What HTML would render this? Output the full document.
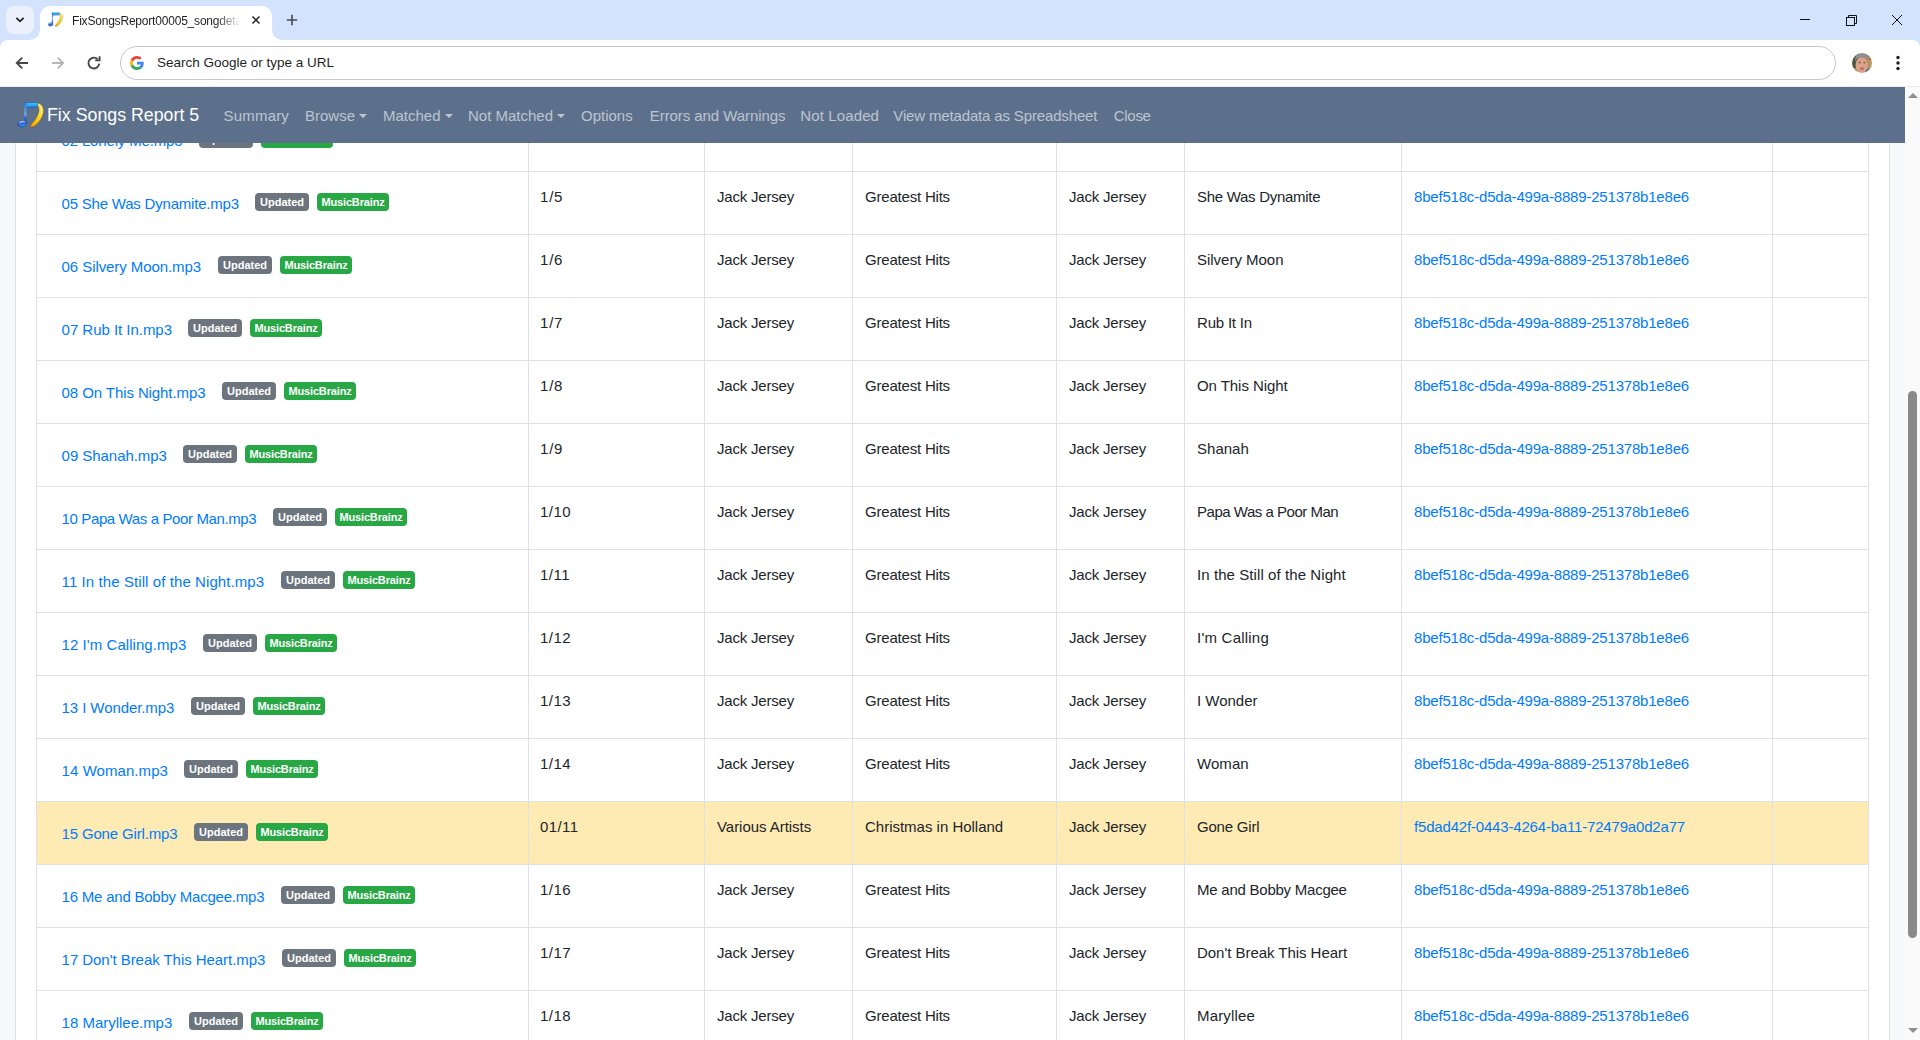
<!DOCTYPE html>
<html><head><meta charset="utf-8"><title>FixSongsReport00005_songdetails</title><style>
*{box-sizing:border-box;margin:0;padding:0}
html,body{width:1920px;height:1040px;overflow:hidden;background:#fff;font-family:"Liberation Sans",sans-serif}
#strip{position:absolute;left:0;top:0;width:1920px;height:50px;background:#d3e3fd}
#tsearch{position:absolute;left:6px;top:6px;width:28px;height:28px;border-radius:8px;background:#eaf1fd}
#tab{position:absolute;left:40px;top:6px;width:232px;height:34px;background:#fff;border-radius:10px 10px 0 0}
#tab:before,#tab:after{content:"";position:absolute;bottom:0;width:10px;height:10px;background:transparent}
#tab:before{left:-10px;border-bottom-right-radius:10px;box-shadow:4px 4px 0 4px #fff}
#tab:after{right:-10px;border-bottom-left-radius:10px;box-shadow:-4px 4px 0 4px #fff}
.ttl{position:absolute;left:32px;top:8px;letter-spacing:-0.2px;font-size:12px;line-height:15px;color:#1f1f1f;white-space:nowrap;width:170px;overflow:hidden;-webkit-mask-image:linear-gradient(90deg,#000 144px,transparent 169px)}
.fav{position:absolute;left:6.3px;top:4.2px}
#toolbar{position:absolute;left:0;top:40px;width:1920px;height:47px;background:#fff;border-radius:8px 8px 0 0}
#omni{position:absolute;left:120px;top:46px;width:1716px;height:34px;border:1px solid #c7c7c7;border-radius:17px;background:#fff}
.omt{position:absolute;left:157px;top:55px;font-size:13.5px;line-height:16px;color:#1f1f1f;white-space:nowrap}
svg.ic{position:absolute}
#page{position:absolute;left:0;top:87px;width:1905px;height:953px;background:#f8f9fa;overflow:hidden}
#card{position:absolute;left:15px;top:-20px;width:1875px;height:1100px;background:#fff;border-left:1px solid #dfdfdf;border-right:1px solid #dfdfdf}
.vl{position:absolute;top:0;width:1px;height:953px;background:#dee2e6}
.hz{position:absolute;left:36px;width:1833px;height:1px;background:#dee2e6}
.hl{position:absolute;left:37px;width:1831px;height:62px;background:#feebb4}
.tx,.lk{position:absolute;font-size:15px;line-height:15px;white-space:nowrap}
.tx{color:#212529;letter-spacing:-0.2px}
.lk{color:#007bff}
.fn{letter-spacing:-0.3px}
.ud{letter-spacing:-0.25px}
.bd{position:absolute;height:18px;border-radius:4px;color:#fff;font-weight:bold;font-size:11px;line-height:18px;text-align:center}
.bs{background:#6c757d;width:54px}
.bg{background:#28a745;width:72px;letter-spacing:-0.15px}
#nav{position:absolute;left:0;top:87px;width:1905px;height:56px;background:#5c708c}
.brand{position:absolute;left:47px;top:18px;font-size:17.8px;line-height:20px;color:#fff;white-space:nowrap}
.logo{position:absolute;left:14px;top:11px}
.nv{position:absolute;top:20.7px;font-size:15px;line-height:16px;color:rgba(255,255,255,.6);white-space:nowrap}
.caret{display:inline-block;width:0;height:0;border-left:4px solid transparent;border-right:4px solid transparent;border-top:4px solid rgba(255,255,255,.6);vertical-align:3px;margin-left:4px}
#sb{position:absolute;left:1905px;top:87px;width:15px;height:953px;background:#fafafa}
#thumb{position:absolute;left:3px;top:304px;width:9px;height:547px;border-radius:5px;background:#8a8a8a}
.arr{position:absolute;left:3px;width:0;height:0;border-left:5px solid transparent;border-right:5px solid transparent}
</style></head><body>
<div id="strip"></div>
<div id="tsearch"></div>
<div id="tab"><svg class="fav" width="18" height="18" viewBox="0 0 32 32">
<defs>
<linearGradient id="lbm2" x1="0" y1="0" x2="0" y2="1"><stop offset="0" stop-color="#3fd0ff"/><stop offset="1" stop-color="#1b86e6"/></linearGradient>
<linearGradient id="lst2" x1="0" y1="0" x2="0" y2="1"><stop offset="0" stop-color="#1a7ce0"/><stop offset=".6" stop-color="#7fb6e8"/><stop offset=".7" stop-color="#1a6fe0"/><stop offset="1" stop-color="#1850c8"/></linearGradient>
<linearGradient id="lhd2" x1="0" y1="0" x2="0" y2="1"><stop offset="0" stop-color="#b9f4ff"/><stop offset=".5" stop-color="#3a5ad0"/><stop offset="1" stop-color="#20c0f0"/></linearGradient>
<linearGradient id="lsw2" x1="1" y1="0" x2="0" y2="1"><stop offset="0" stop-color="#fff7a0"/><stop offset=".45" stop-color="#ffd820"/><stop offset=".85" stop-color="#ffb000"/><stop offset="1" stop-color="#ff7800"/></linearGradient>
</defs>
<path d="M10.4 4.9 L23.6 4.4 L24.4 9 L12.2 9.4 Z" fill="url(#lbm2)" stroke="#1550b0" stroke-width=".5"/>
<rect x="10.4" y="5" width="1.9" height="20" fill="url(#lst2)"/>
<ellipse cx="8.2" cy="25.6" rx="4.2" ry="3.2" transform="rotate(-12 8.2 25.6)" fill="url(#lhd2)" stroke="#1a2f9a" stroke-width=".6"/>
<path d="M23.6 5 C28 6 30 9.5 29.4 14 C28.8 19.5 24.5 25.5 19.5 28.6 C17.5 29.6 15.8 29 16.4 27.4 C20 23.5 23.8 18.5 24.8 14 C25.3 11 24.8 9 23.9 8 Z" fill="url(#lsw2)" stroke="#7a5a10" stroke-width=".5"/>
</svg><span class="ttl">FixSongsReport00005_songdetails</span></div>
<div id="toolbar"></div>
<div id="omni"></div>
<div style="position:absolute;left:0;top:86px;width:1920px;height:1px;background:#ececec"></div>
<span class="omt">Search Google or type a URL</span>

<svg class="ic" style="left:14px;top:14px" width="12" height="12" viewBox="0 0 12 12"><path d="M2.4 3.8 L6 7.4 L9.6 3.8" fill="none" stroke="#1f1f1f" stroke-width="1.7"/></svg>
<svg class="ic" style="left:251px;top:15px" width="10" height="10" viewBox="0 0 10 10"><path d="M1.5 1.5 L8.5 8.5 M8.5 1.5 L1.5 8.5" stroke="#1f1f1f" stroke-width="1.45"/></svg>
<svg class="ic" style="left:286px;top:14px" width="12" height="12" viewBox="0 0 12 12"><path d="M6 0.8 V11.2 M0.8 6 H11.2" stroke="#474747" stroke-width="1.6"/></svg>
<svg class="ic" style="left:1799px;top:14px" width="12" height="12" viewBox="0 0 12 12"><path d="M1 5.5 H11" stroke="#111" stroke-width="1"/></svg>
<svg class="ic" style="left:1845px;top:14px" width="12" height="12" viewBox="0 0 12 12"><rect x="1.5" y="3.5" width="8" height="8" fill="none" stroke="#111" stroke-width="1"/><path d="M3.5 1.5 H11.5 V9.5 M3.5 1.5 V3.5 M9.5 9.5 H11.5" fill="none" stroke="#111" stroke-width="1"/></svg>
<svg class="ic" style="left:1891px;top:14px" width="12" height="12" viewBox="0 0 12 12"><path d="M1 1 L11 11 M11 1 L1 11" stroke="#111" stroke-width="1"/></svg>
<svg class="ic" style="left:14px;top:55px" width="16" height="16" viewBox="0 0 16 16"><path d="M14 8 H3 M8.2 2.6 L2.8 8 L8.2 13.4" fill="none" stroke="#474747" stroke-width="1.9"/></svg>
<svg class="ic" style="left:50px;top:55px" width="16" height="16" viewBox="0 0 16 16"><path d="M2 8 H13 M7.8 2.6 L13.2 8 L7.8 13.4" fill="none" stroke="#b7b7b7" stroke-width="1.9"/></svg>
<svg class="ic" style="left:86px;top:55px" width="16" height="16" viewBox="0 0 16 16"><path d="M13.2 8.6 A5.4 5.4 0 1 1 11.6 4.2" fill="none" stroke="#474747" stroke-width="1.9"/><path d="M9.2 5.4 H13.6 V1.2" fill="none" stroke="#474747" stroke-width="1.9"/></svg>
<svg class="ic" style="left:130px;top:56px" width="14" height="14" viewBox="0 0 48 48"><path fill="#EA4335" d="M24 9.5c3.54 0 6.71 1.22 9.21 3.6l6.85-6.85C35.9 2.38 30.47 0 24 0 14.62 0 6.51 5.38 2.56 13.22l7.98 6.19C12.43 13.72 17.74 9.5 24 9.5z"/><path fill="#4285F4" d="M46.98 24.55c0-1.57-.15-3.09-.38-4.55H24v9.02h12.94c-.58 2.96-2.26 5.48-4.78 7.18l7.73 6c4.51-4.18 7.09-10.36 7.09-17.65z"/><path fill="#FBBC05" d="M10.53 28.59c-.48-1.45-.76-2.99-.76-4.59s.27-3.14.76-4.59l-7.98-6.19C.92 16.46 0 20.12 0 24c0 3.88.92 7.54 2.56 10.78l7.97-6.19z"/><path fill="#34A853" d="M24 48c6.48 0 11.93-2.13 15.89-5.81l-7.73-6c-2.15 1.45-4.92 2.3-8.16 2.3-6.26 0-11.57-4.22-13.47-9.91l-7.98 6.19C6.51 42.62 14.62 48 24 48z"/></svg>
<svg class="ic" style="left:1850px;top:51px" width="24" height="24" viewBox="0 0 24 24"><defs><clipPath id="av"><circle cx="12" cy="12" r="10"/></clipPath><filter id="avb"><feGaussianBlur stdDeviation=".45"/></filter></defs><g clip-path="url(#av)"><g filter="url(#avb)"><rect width="24" height="24" fill="#a88c5c"/><path d="M0 0 H9 V8 L6 17 H0Z" fill="#4f5a3c"/><path d="M15 0 H24 V7 L19 6Z" fill="#5b6b45"/><rect x="17" y="9" width="6" height="11" fill="#b89462"/><ellipse cx="11.6" cy="14.2" rx="6" ry="8" fill="#dba38c"/><path d="M5.2 10 C4.8 4 8 2.2 12 2.2 C16 2.2 18.6 4.5 18.2 9.5 C17 6.8 15 6 12 6.2 C8.5 6.4 6.6 7.5 5.2 10Z" fill="#8f8f99"/><ellipse cx="9.6" cy="11.6" rx="1.3" ry=".8" fill="#8a5a40"/><ellipse cx="14.4" cy="11.6" rx="1.3" ry=".8" fill="#8a5a40"/><ellipse cx="12" cy="17.5" rx="2.6" ry="1.6" fill="#b97a66"/><path d="M15.5 19.5 L19 17.5 L21 19.5 L17.5 23Z" fill="#3b62b4"/><circle cx="20.4" cy="8.2" r="1" fill="#d04848"/></g></g></svg>
<svg class="ic" style="left:1895px;top:55px" width="6" height="16" viewBox="0 0 6 16"><circle cx="3" cy="2.5" r="1.7" fill="#1f1f1f"/><circle cx="3" cy="8" r="1.7" fill="#1f1f1f"/><circle cx="3" cy="13.5" r="1.7" fill="#1f1f1f"/></svg>

<div id="page">
<div id="card"></div>
<div class="hl" style="top:715px"></div>
<div class="vl" style="left:36px"></div>
<div class="vl" style="left:528px"></div>
<div class="vl" style="left:704px"></div>
<div class="vl" style="left:852px"></div>
<div class="vl" style="left:1056px"></div>
<div class="vl" style="left:1184px"></div>
<div class="vl" style="left:1401px"></div>
<div class="vl" style="left:1772px"></div>
<div class="vl" style="left:1868px"></div>
<div class="hz" style="top:21px"></div>
<div class="hz" style="top:84px"></div>
<div class="hz" style="top:147px"></div>
<div class="hz" style="top:210px"></div>
<div class="hz" style="top:273px"></div>
<div class="hz" style="top:336px"></div>
<div class="hz" style="top:399px"></div>
<div class="hz" style="top:462px"></div>
<div class="hz" style="top:525px"></div>
<div class="hz" style="top:588px"></div>
<div class="hz" style="top:651px"></div>
<div class="hz" style="top:714px"></div>
<div class="hz" style="top:777px"></div>
<div class="hz" style="top:840px"></div>
<div class="hz" style="top:903px"></div>
<div class="hz" style="top:966px"></div>
<a class="lk fn" style="left:61.6px;top:45.90px;letter-spacing:-0.167px">02 Lonely Me.mp3</a>
<span class="bd bs" style="left:199px;top:43px">Updated</span>
<span class="bd bg" style="left:261px;top:43px">MusicBrainz</span>
<span class="tx" style="left:540px;top:39.10px;letter-spacing:0.800px">1/2</span>
<span class="tx" style="left:717px;top:39.10px;letter-spacing:-0.200px">Jack Jersey</span>
<span class="tx" style="left:865px;top:39.10px;letter-spacing:-0.200px">Greatest Hits</span>
<span class="tx" style="left:1069px;top:39.10px;letter-spacing:-0.200px">Jack Jersey</span>
<span class="tx" style="left:1197px;top:39.10px;letter-spacing:-0.200px">Lonely Me</span>
<a class="lk ud" style="left:1414px;top:39.10px;letter-spacing:-0.193px">8bef518c-d5da-499a-8889-251378b1e8e6</a>
<a class="lk fn" style="left:61.6px;top:108.90px;letter-spacing:-0.209px">05 She Was Dynamite.mp3</a>
<span class="bd bs" style="left:255px;top:106px">Updated</span>
<span class="bd bg" style="left:317px;top:106px">MusicBrainz</span>
<span class="tx" style="left:540px;top:102.10px;letter-spacing:0.800px">1/5</span>
<span class="tx" style="left:717px;top:102.10px;letter-spacing:-0.200px">Jack Jersey</span>
<span class="tx" style="left:865px;top:102.10px;letter-spacing:-0.200px">Greatest Hits</span>
<span class="tx" style="left:1069px;top:102.10px;letter-spacing:-0.200px">Jack Jersey</span>
<span class="tx" style="left:1197px;top:102.10px;letter-spacing:-0.290px">She Was Dynamite</span>
<a class="lk ud" style="left:1414px;top:102.10px;letter-spacing:-0.193px">8bef518c-d5da-499a-8889-251378b1e8e6</a>
<a class="lk fn" style="left:61.6px;top:171.90px;letter-spacing:-0.078px">06 Silvery Moon.mp3</a>
<span class="bd bs" style="left:218px;top:169px">Updated</span>
<span class="bd bg" style="left:280px;top:169px">MusicBrainz</span>
<span class="tx" style="left:540px;top:165.10px;letter-spacing:0.800px">1/6</span>
<span class="tx" style="left:717px;top:165.10px;letter-spacing:-0.200px">Jack Jersey</span>
<span class="tx" style="left:865px;top:165.10px;letter-spacing:-0.200px">Greatest Hits</span>
<span class="tx" style="left:1069px;top:165.10px;letter-spacing:-0.200px">Jack Jersey</span>
<span class="tx" style="left:1197px;top:165.10px;letter-spacing:-0.020px">Silvery Moon</span>
<a class="lk ud" style="left:1414px;top:165.10px;letter-spacing:-0.193px">8bef518c-d5da-499a-8889-251378b1e8e6</a>
<a class="lk fn" style="left:61.6px;top:234.90px;letter-spacing:-0.033px">07 Rub It In.mp3</a>
<span class="bd bs" style="left:188px;top:232px">Updated</span>
<span class="bd bg" style="left:250px;top:232px">MusicBrainz</span>
<span class="tx" style="left:540px;top:228.10px;letter-spacing:0.800px">1/7</span>
<span class="tx" style="left:717px;top:228.10px;letter-spacing:-0.200px">Jack Jersey</span>
<span class="tx" style="left:865px;top:228.10px;letter-spacing:-0.200px">Greatest Hits</span>
<span class="tx" style="left:1069px;top:228.10px;letter-spacing:-0.200px">Jack Jersey</span>
<span class="tx" style="left:1197px;top:228.10px;letter-spacing:-0.200px">Rub It In</span>
<a class="lk ud" style="left:1414px;top:228.10px;letter-spacing:-0.193px">8bef518c-d5da-499a-8889-251378b1e8e6</a>
<a class="lk fn" style="left:61.6px;top:297.90px;letter-spacing:-0.089px">08 On This Night.mp3</a>
<span class="bd bs" style="left:222px;top:295px">Updated</span>
<span class="bd bg" style="left:284px;top:295px">MusicBrainz</span>
<span class="tx" style="left:540px;top:291.10px;letter-spacing:0.800px">1/8</span>
<span class="tx" style="left:717px;top:291.10px;letter-spacing:-0.200px">Jack Jersey</span>
<span class="tx" style="left:865px;top:291.10px;letter-spacing:-0.200px">Greatest Hits</span>
<span class="tx" style="left:1069px;top:291.10px;letter-spacing:-0.200px">Jack Jersey</span>
<span class="tx" style="left:1197px;top:291.10px;letter-spacing:-0.060px">On This Night</span>
<a class="lk ud" style="left:1414px;top:291.10px;letter-spacing:-0.193px">8bef518c-d5da-499a-8889-251378b1e8e6</a>
<a class="lk fn" style="left:61.6px;top:360.90px;letter-spacing:-0.050px">09 Shanah.mp3</a>
<span class="bd bs" style="left:183px;top:358px">Updated</span>
<span class="bd bg" style="left:245px;top:358px">MusicBrainz</span>
<span class="tx" style="left:540px;top:354.10px;letter-spacing:0.800px">1/9</span>
<span class="tx" style="left:717px;top:354.10px;letter-spacing:-0.200px">Jack Jersey</span>
<span class="tx" style="left:865px;top:354.10px;letter-spacing:-0.200px">Greatest Hits</span>
<span class="tx" style="left:1069px;top:354.10px;letter-spacing:-0.200px">Jack Jersey</span>
<span class="tx" style="left:1197px;top:354.10px;letter-spacing:0.020px">Shanah</span>
<a class="lk ud" style="left:1414px;top:354.10px;letter-spacing:-0.193px">8bef518c-d5da-499a-8889-251378b1e8e6</a>
<a class="lk fn" style="left:61.6px;top:423.90px;letter-spacing:-0.380px">10 Papa Was a Poor Man.mp3</a>
<span class="bd bs" style="left:273px;top:421px">Updated</span>
<span class="bd bg" style="left:335px;top:421px">MusicBrainz</span>
<span class="tx" style="left:540px;top:417.10px;letter-spacing:0.467px">1/10</span>
<span class="tx" style="left:717px;top:417.10px;letter-spacing:-0.200px">Jack Jersey</span>
<span class="tx" style="left:865px;top:417.10px;letter-spacing:-0.200px">Greatest Hits</span>
<span class="tx" style="left:1069px;top:417.10px;letter-spacing:-0.200px">Jack Jersey</span>
<span class="tx" style="left:1197px;top:417.10px;letter-spacing:-0.480px">Papa Was a Poor Man</span>
<a class="lk ud" style="left:1414px;top:417.10px;letter-spacing:-0.193px">8bef518c-d5da-499a-8889-251378b1e8e6</a>
<a class="lk fn" style="left:61.6px;top:486.90px;letter-spacing:0.087px">11 In the Still of the Night.mp3</a>
<span class="bd bs" style="left:281px;top:484px">Updated</span>
<span class="bd bg" style="left:343px;top:484px">MusicBrainz</span>
<span class="tx" style="left:540px;top:480.10px;letter-spacing:0.467px">1/11</span>
<span class="tx" style="left:717px;top:480.10px;letter-spacing:-0.200px">Jack Jersey</span>
<span class="tx" style="left:865px;top:480.10px;letter-spacing:-0.200px">Greatest Hits</span>
<span class="tx" style="left:1069px;top:480.10px;letter-spacing:-0.200px">Jack Jersey</span>
<span class="tx" style="left:1197px;top:480.10px;letter-spacing:0.080px">In the Still of the Night</span>
<a class="lk ud" style="left:1414px;top:480.10px;letter-spacing:-0.193px">8bef518c-d5da-499a-8889-251378b1e8e6</a>
<a class="lk fn" style="left:61.6px;top:549.90px;letter-spacing:0.053px">12 I&#x27;m Calling.mp3</a>
<span class="bd bs" style="left:203px;top:547px">Updated</span>
<span class="bd bg" style="left:265px;top:547px">MusicBrainz</span>
<span class="tx" style="left:540px;top:543.10px;letter-spacing:0.467px">1/12</span>
<span class="tx" style="left:717px;top:543.10px;letter-spacing:-0.200px">Jack Jersey</span>
<span class="tx" style="left:865px;top:543.10px;letter-spacing:-0.200px">Greatest Hits</span>
<span class="tx" style="left:1069px;top:543.10px;letter-spacing:-0.200px">Jack Jersey</span>
<span class="tx" style="left:1197px;top:543.10px;letter-spacing:0.220px">I&#x27;m Calling</span>
<a class="lk ud" style="left:1414px;top:543.10px;letter-spacing:-0.193px">8bef518c-d5da-499a-8889-251378b1e8e6</a>
<a class="lk fn" style="left:61.6px;top:612.90px;letter-spacing:-0.086px">13 I Wonder.mp3</a>
<span class="bd bs" style="left:191px;top:610px">Updated</span>
<span class="bd bg" style="left:253px;top:610px">MusicBrainz</span>
<span class="tx" style="left:540px;top:606.10px;letter-spacing:0.467px">1/13</span>
<span class="tx" style="left:717px;top:606.10px;letter-spacing:-0.200px">Jack Jersey</span>
<span class="tx" style="left:865px;top:606.10px;letter-spacing:-0.200px">Greatest Hits</span>
<span class="tx" style="left:1069px;top:606.10px;letter-spacing:-0.200px">Jack Jersey</span>
<span class="tx" style="left:1197px;top:606.10px;letter-spacing:-0.010px">I Wonder</span>
<a class="lk ud" style="left:1414px;top:606.10px;letter-spacing:-0.193px">8bef518c-d5da-499a-8889-251378b1e8e6</a>
<a class="lk fn" style="left:61.6px;top:675.90px;letter-spacing:0.064px">14 Woman.mp3</a>
<span class="bd bs" style="left:184px;top:673px">Updated</span>
<span class="bd bg" style="left:246px;top:673px">MusicBrainz</span>
<span class="tx" style="left:540px;top:669.10px;letter-spacing:0.467px">1/14</span>
<span class="tx" style="left:717px;top:669.10px;letter-spacing:-0.200px">Jack Jersey</span>
<span class="tx" style="left:865px;top:669.10px;letter-spacing:-0.200px">Greatest Hits</span>
<span class="tx" style="left:1069px;top:669.10px;letter-spacing:-0.200px">Jack Jersey</span>
<span class="tx" style="left:1197px;top:669.10px;letter-spacing:0.070px">Woman</span>
<a class="lk ud" style="left:1414px;top:669.10px;letter-spacing:-0.193px">8bef518c-d5da-499a-8889-251378b1e8e6</a>
<a class="lk fn" style="left:61.6px;top:738.90px;letter-spacing:-0.167px">15 Gone Girl.mp3</a>
<span class="bd bs" style="left:194px;top:736px">Updated</span>
<span class="bd bg" style="left:256px;top:736px">MusicBrainz</span>
<span class="tx" style="left:540px;top:732.10px;letter-spacing:0.400px">01/11</span>
<span class="tx" style="left:717px;top:732.10px;letter-spacing:-0.040px">Various Artists</span>
<span class="tx" style="left:865px;top:732.10px;letter-spacing:-0.010px">Christmas in Holland</span>
<span class="tx" style="left:1069px;top:732.10px;letter-spacing:-0.200px">Jack Jersey</span>
<span class="tx" style="left:1197px;top:732.10px;letter-spacing:-0.200px">Gone Girl</span>
<a class="lk ud" style="left:1414px;top:732.10px;letter-spacing:-0.180px">f5dad42f-0443-4264-ba11-72479a0d2a77</a>
<a class="lk fn" style="left:61.6px;top:801.90px;letter-spacing:-0.220px">16 Me and Bobby Macgee.mp3</a>
<span class="bd bs" style="left:281px;top:799px">Updated</span>
<span class="bd bg" style="left:343px;top:799px">MusicBrainz</span>
<span class="tx" style="left:540px;top:795.10px;letter-spacing:0.467px">1/16</span>
<span class="tx" style="left:717px;top:795.10px;letter-spacing:-0.200px">Jack Jersey</span>
<span class="tx" style="left:865px;top:795.10px;letter-spacing:-0.200px">Greatest Hits</span>
<span class="tx" style="left:1069px;top:795.10px;letter-spacing:-0.200px">Jack Jersey</span>
<span class="tx" style="left:1197px;top:795.10px;letter-spacing:-0.240px">Me and Bobby Macgee</span>
<a class="lk ud" style="left:1414px;top:795.10px;letter-spacing:-0.193px">8bef518c-d5da-499a-8889-251378b1e8e6</a>
<a class="lk fn" style="left:61.6px;top:864.90px;letter-spacing:-0.050px">17 Don&#x27;t Break This Heart.mp3</a>
<span class="bd bs" style="left:282px;top:862px">Updated</span>
<span class="bd bg" style="left:344px;top:862px">MusicBrainz</span>
<span class="tx" style="left:540px;top:858.10px;letter-spacing:0.467px">1/17</span>
<span class="tx" style="left:717px;top:858.10px;letter-spacing:-0.200px">Jack Jersey</span>
<span class="tx" style="left:865px;top:858.10px;letter-spacing:-0.200px">Greatest Hits</span>
<span class="tx" style="left:1069px;top:858.10px;letter-spacing:-0.200px">Jack Jersey</span>
<span class="tx" style="left:1197px;top:858.10px;letter-spacing:-0.040px">Don&#x27;t Break This Heart</span>
<a class="lk ud" style="left:1414px;top:858.10px;letter-spacing:-0.193px">8bef518c-d5da-499a-8889-251378b1e8e6</a>
<a class="lk fn" style="left:61.6px;top:927.90px;letter-spacing:-0.014px">18 Maryllee.mp3</a>
<span class="bd bs" style="left:189px;top:925px">Updated</span>
<span class="bd bg" style="left:251px;top:925px">MusicBrainz</span>
<span class="tx" style="left:540px;top:921.10px;letter-spacing:0.467px">1/18</span>
<span class="tx" style="left:717px;top:921.10px;letter-spacing:-0.200px">Jack Jersey</span>
<span class="tx" style="left:865px;top:921.10px;letter-spacing:-0.200px">Greatest Hits</span>
<span class="tx" style="left:1069px;top:921.10px;letter-spacing:-0.200px">Jack Jersey</span>
<span class="tx" style="left:1197px;top:921.10px;letter-spacing:0.160px">Maryllee</span>
<a class="lk ud" style="left:1414px;top:921.10px;letter-spacing:-0.193px">8bef518c-d5da-499a-8889-251378b1e8e6</a>
</div>
<div id="nav"><svg class="logo" width="32" height="32" viewBox="0 0 32 32">
<defs>
<linearGradient id="lbm" x1="0" y1="0" x2="0" y2="1"><stop offset="0" stop-color="#3fd0ff"/><stop offset="1" stop-color="#1b86e6"/></linearGradient>
<linearGradient id="lst" x1="0" y1="0" x2="0" y2="1"><stop offset="0" stop-color="#1a7ce0"/><stop offset=".6" stop-color="#7fb6e8"/><stop offset=".7" stop-color="#1a6fe0"/><stop offset="1" stop-color="#1850c8"/></linearGradient>
<linearGradient id="lhd" x1="0" y1="0" x2="0" y2="1"><stop offset="0" stop-color="#b9f4ff"/><stop offset=".5" stop-color="#3a5ad0"/><stop offset="1" stop-color="#20c0f0"/></linearGradient>
<linearGradient id="lsw" x1="1" y1="0" x2="0" y2="1"><stop offset="0" stop-color="#fff7a0"/><stop offset=".45" stop-color="#ffd820"/><stop offset=".85" stop-color="#ffb000"/><stop offset="1" stop-color="#ff7800"/></linearGradient>
</defs>
<path d="M10.4 4.9 L23.6 4.4 L24.4 9 L12.2 9.4 Z" fill="url(#lbm)" stroke="#1550b0" stroke-width=".5"/>
<rect x="10.4" y="5" width="1.9" height="20" fill="url(#lst)"/>
<ellipse cx="8.2" cy="25.6" rx="4.2" ry="3.2" transform="rotate(-12 8.2 25.6)" fill="url(#lhd)" stroke="#1a2f9a" stroke-width=".6"/>
<path d="M23.6 5 C28 6 30 9.5 29.4 14 C28.8 19.5 24.5 25.5 19.5 28.6 C17.5 29.6 15.8 29 16.4 27.4 C20 23.5 23.8 18.5 24.8 14 C25.3 11 24.8 9 23.9 8 Z" fill="url(#lsw)" stroke="#7a5a10" stroke-width=".5"/>
</svg><span class="brand">Fix Songs Report 5</span><span class="nv" style="left:223.5px;letter-spacing:0.20px">Summary</span>
<span class="nv" style="left:305.0px;letter-spacing:0.00px">Browse<i class="caret"></i></span>
<span class="nv" style="left:383.0px;letter-spacing:0.00px">Matched<i class="caret"></i></span>
<span class="nv" style="left:468.0px;letter-spacing:0.00px">Not Matched<i class="caret"></i></span>
<span class="nv" style="left:581.0px;letter-spacing:0.00px">Options</span>
<span class="nv" style="left:649.8px;letter-spacing:-0.07px">Errors and Warnings</span>
<span class="nv" style="left:800.3px;letter-spacing:0.12px">Not Loaded</span>
<span class="nv" style="left:893.3px;letter-spacing:-0.15px">View metadata as Spreadsheet</span>
<span class="nv" style="left:1113.8px;letter-spacing:-0.30px">Close</span></div>
<div id="sb"><div class="arr" style="top:6px;border-bottom:5px solid #8f8f8f"></div><div id="thumb"></div><div class="arr" style="top:941px;border-top:5px solid #8f8f8f"></div></div>
</body></html>
